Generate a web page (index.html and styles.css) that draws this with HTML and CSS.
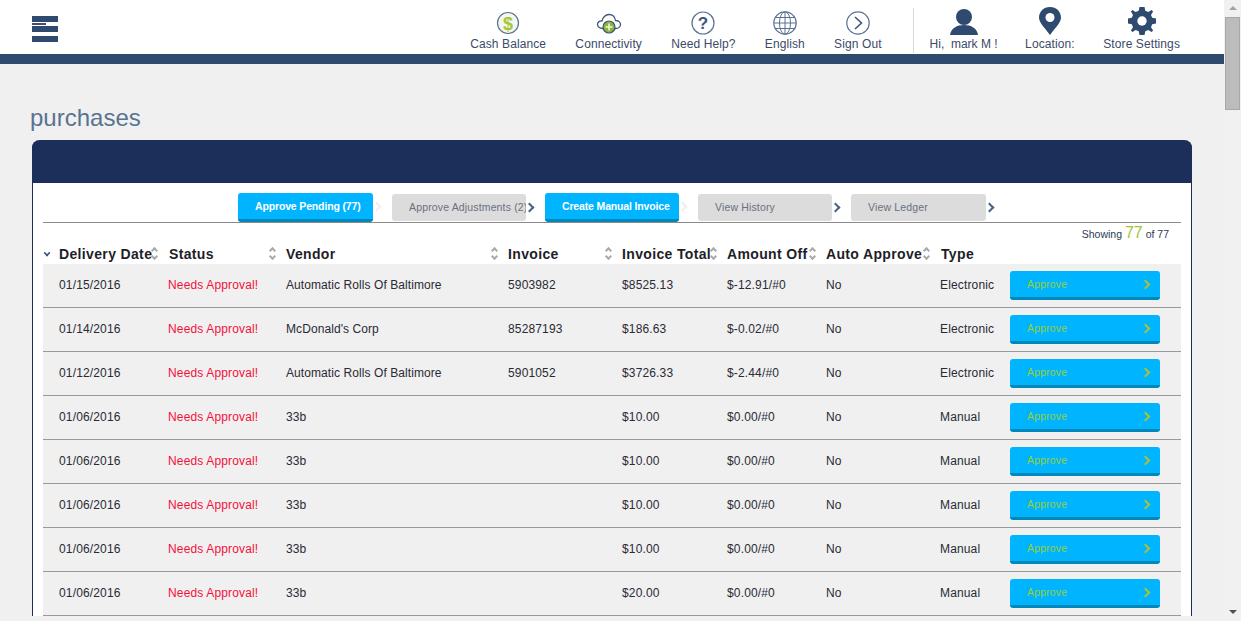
FILE: index.html
```html
<!DOCTYPE html>
<html lang="en">
<head>
    <meta charset="UTF-8">
    <meta name="viewport" content="width=device-width, initial-scale=1.0">
    <title>Purchases</title>
    <link rel="stylesheet" href="styles.css">
</head>
<body>
<div class="page">
    <div class="main">
        <header class="topbar">
            <svg class="hamburger" width="26" height="26" viewBox="0 0 26 26">
                <rect x="0" y="0" width="26" height="6" fill="#2e4a6e"/>
                <rect x="0" y="7" width="14" height="2" fill="#4a4a78"/>
                <rect x="0" y="10" width="26" height="6" fill="#2e4a6e"/>
                <rect x="0" y="20" width="26" height="6" fill="#2e4a6e"/>
            </svg>
            <nav class="topnav">
                <div class="nav-left">
                    <a class="nav-item">
                        <svg width="24" height="24" viewBox="0 0 24 24">
                            <circle cx="12" cy="12" r="10.5" fill="#f4f7ee" stroke="#5b7190" stroke-width="1.2"/>
                            <text x="12" y="18.5" class="icon-dollar">$</text>
                        </svg>
                        <span>Cash Balance</span>
                    </a>
                    <a class="nav-item">
                        <svg width="26" height="24" viewBox="0 0 26 24">
                            <path d="M7 17.5 C3.5 17.5 1.5 15.5 1.5 13.5 C1.5 11 4 9.5 6 10 C6.5 6.5 9.5 3.5 13 3.5 C16.5 3.5 19 6 19.5 9.5 C22.5 9.5 24.5 11.5 24.5 13.5 C24.5 15.5 22.5 17.5 19.5 17.5 Z" fill="#fff" stroke="#3d5679" stroke-width="1.3"/>
                            <circle cx="13" cy="16" r="6" fill="#8db33c" stroke="#3d5679" stroke-width="1.2"/>
                            <path d="M13 12.5 V19.5 M9.5 16 H16.5" stroke="#f0f5e0" stroke-width="1.6"/>
                        </svg>
                        <span>Connectivity</span>
                    </a>
                    <a class="nav-item">
                        <svg width="24" height="24" viewBox="0 0 24 24">
                            <circle cx="12" cy="12" r="11" fill="#fff" stroke="#5b7190" stroke-width="1.2"/>
                            <text x="12" y="18" class="icon-question">?</text>
                        </svg>
                        <span>Need Help?</span>
                    </a>
                    <a class="nav-item">
                        <svg width="24" height="24" viewBox="0 0 24 24" fill="none" stroke="#5b7190" stroke-width="1">
                            <circle cx="12" cy="12" r="11.2" stroke-width="1.2"/>
                            <ellipse cx="12" cy="12" rx="5.5" ry="11.2"/>
                            <path d="M12 1 V23 M1 12 H23 M2.5 6.5 H21.5 M2.5 17.5 H21.5"/>
                        </svg>
                        <span>English</span>
                    </a>
                    <a class="nav-item">
                        <svg width="24" height="24" viewBox="0 0 24 24" fill="none" stroke="#5b7190">
                            <circle cx="12" cy="12" r="11.2" stroke-width="1.2"/>
                            <path d="M9 6 L15.5 12 L9 18" stroke="#3d5679" stroke-width="1.6"/>
                        </svg>
                        <span>Sign Out</span>
                    </a>
                </div>
                <div class="nav-divider"></div>
                <a class="nav-item nav-user">
                    <svg width="28" height="26" viewBox="0 0 28 26" fill="#2e4a6e">
                        <circle cx="14" cy="8" r="8"/>
                        <path d="M0 26 C1 19 7 16 14 16 C21 16 27 19 28 26 Z"/>
                    </svg>
                    <span>Hi,&nbsp; mark M !</span>
                </a>
                <a class="nav-item nav-location">
                    <svg width="22" height="28" viewBox="0 0 22 28">
                        <path d="M11 0 C4.5 0 0 4.7 0 10.5 C0 16 6 21 11 28 C16 21 22 16 22 10.5 C22 4.7 17.500 0 11 0 Z" fill="#2e4a6e"/>
                        <circle cx="11" cy="10.500" r="4.500" fill="#fff"/>
                    </svg>
                    <span>Location:</span>
                </a>
                <a class="nav-item">
                    <svg width="28" height="28" viewBox="0 0 28 28">
                        <path d="M11.500 0 H16.500 L17.300 3.800 L20.300 5 L23.600 2.900 L25.100 4.400 L23 8 L24.200 10.800 L28 11.500 V16.500 L24.200 17.300 L23 20.200 L25.100 23.600 L23.600 25.100 L20.300 23 L17.300 24.200 L16.500 28 H11.500 L10.700 24.200 L7.700 23 L4.400 25.100 L2.900 23.600 L5 20.200 L3.800 17.300 L0 16.500 V11.500 L3.800 10.800 L5 8 L2.900 4.400 L4.400 2.900 L7.700 5 L10.700 3.800 Z" fill="#2e4a6e"/>
                        <circle cx="14" cy="14" r="4.700" fill="#fff"/>
                    </svg>
                    <span>Store Settings</span>
                </a>
            </nav>
        </header>
        <div class="topstripe"></div>

        <h1 class="page-title">purchases</h1>

        <section class="card">
            <div class="card-head"></div>
            <div class="card-body">
                <div class="tabs">
                    <a class="tab tab-active"><span class="tab-label">Approve Pending (77)</span><i class="tab-arrow arrow-faint"></i></a>
                    <a class="tab"><span class="tab-label">Approve Adjustments (2)</span><i class="tab-arrow"></i></a>
                    <a class="tab tab-active"><span class="tab-label">Create Manual Invoice</span><i class="tab-arrow arrow-faint"></i></a>
                    <a class="tab"><span class="tab-label">View History</span><i class="tab-arrow"></i></a>
                    <a class="tab"><span class="tab-label">View Ledger</span><i class="tab-arrow"></i></a>
                </div>
                <p class="showing">Showing <b>77</b> of 77</p>
                <table class="orders">
                    <colgroup>
                        <col class="c-date"><col class="c-status"><col class="c-vendor"><col class="c-invoice">
                        <col class="c-total"><col class="c-off"><col class="c-auto"><col class="c-type"><col class="c-action">
                    </colgroup>
                    <thead>
                        <tr>
                            <th><div class="th-in"><i class="sort-down"></i>Delivery Date<i class="sort"></i></div></th>
                            <th class="th-nudge"><div class="th-in">Status<i class="sort"></i></div></th>
                            <th><div class="th-in">Vendor<i class="sort"></i></div></th>
                            <th><div class="th-in">Invoice<i class="sort"></i></div></th>
                            <th><div class="th-in">Invoice Total<i class="sort"></i></div></th>
                            <th><div class="th-in">Amount Off<i class="sort"></i></div></th>
                            <th><div class="th-in">Auto Approve<i class="sort"></i></div></th>
                            <th class="th-nudge" colspan="2"><div class="th-in">Type</div></th>
                        </tr>
                    </thead>
                    <tbody>
                        <tr><td class="td-date">01/15/2016</td><td class="needs">Needs Approval!</td><td class="vendor">Automatic Rolls Of Baltimore</td><td>5903982</td><td>$8525.13</td><td>$-12.91/#0</td><td>No</td><td>Electronic</td><td class="td-action"><a class="approve">Approve</a></td></tr>
                        <tr><td class="td-date">01/14/2016</td><td class="needs">Needs Approval!</td><td class="vendor">McDonald's Corp</td><td>85287193</td><td>$186.63</td><td>$-0.02/#0</td><td>No</td><td>Electronic</td><td class="td-action"><a class="approve">Approve</a></td></tr>
                        <tr><td class="td-date">01/12/2016</td><td class="needs">Needs Approval!</td><td class="vendor">Automatic Rolls Of Baltimore</td><td>5901052</td><td>$3726.33</td><td>$-2.44/#0</td><td>No</td><td>Electronic</td><td class="td-action"><a class="approve">Approve</a></td></tr>
                        <tr><td class="td-date">01/06/2016</td><td class="needs">Needs Approval!</td><td class="vendor">33b</td><td></td><td>$10.00</td><td>$0.00/#0</td><td>No</td><td>Manual</td><td class="td-action"><a class="approve">Approve</a></td></tr>
                        <tr><td class="td-date">01/06/2016</td><td class="needs">Needs Approval!</td><td class="vendor">33b</td><td></td><td>$10.00</td><td>$0.00/#0</td><td>No</td><td>Manual</td><td class="td-action"><a class="approve">Approve</a></td></tr>
                        <tr><td class="td-date">01/06/2016</td><td class="needs">Needs Approval!</td><td class="vendor">33b</td><td></td><td>$10.00</td><td>$0.00/#0</td><td>No</td><td>Manual</td><td class="td-action"><a class="approve">Approve</a></td></tr>
                        <tr><td class="td-date">01/06/2016</td><td class="needs">Needs Approval!</td><td class="vendor">33b</td><td></td><td>$10.00</td><td>$0.00/#0</td><td>No</td><td>Manual</td><td class="td-action"><a class="approve">Approve</a></td></tr>
                        <tr><td class="td-date">01/06/2016</td><td class="needs">Needs Approval!</td><td class="vendor">33b</td><td></td><td>$20.00</td><td>$0.00/#0</td><td>No</td><td>Manual</td><td class="td-action"><a class="approve">Approve</a></td></tr>
                    </tbody>
                </table>
            </div>
        </section>
    </div>
    <div class="scrollbar">
        <div class="sb-up"></div>
        <div class="sb-thumb"></div>
        <div class="sb-track"></div>
        <div class="sb-down"></div>
    </div>
</div>
</body>
</html>
```

FILE: styles.css
```css
html, body {
    height: 100%;
    margin: 0;
    padding: 0;
    overflow: hidden;
}

body {
    font-family: "Liberation Sans", Arial, sans-serif;
    background-color: #f0f0f0;
    color: #222;
}

.page {
    display: flex;
    height: 100%;
}

.main {
    flex: 1;
    min-width: 0;
    overflow: hidden;
}

/* top bar */
.topbar {
    display: flex;
    align-items: flex-start;
    justify-content: space-between;
    height: 54px;
    background-color: #fff;
    padding: 0 44px 0 32px;
}

.hamburger {
    margin-top: 16px;
}

.topnav {
    display: flex;
    gap: 28.500px;
    height: 54px;
}

.nav-left {
    display: flex;
    gap: 29.250px;
}

.nav-item {
    display: flex;
    flex-direction: column;
    align-items: center;
    justify-content: flex-end;
    gap: 2px;
    font-size: 12px;
    letter-spacing: .1px;
    line-height: 14px;
    padding-bottom: 3px;
    box-sizing: border-box;
    height: 54px;
    color: #3b4a68;
    white-space: nowrap;
}

.nav-divider {
    width: 1px;
    height: 45px;
    margin: 8px -13px 0 3px;
    background-color: #d8d8d8;
}

.nav-user {
    letter-spacing: 0;
}

.nav-location {
    margin-left: -1px;
}

.icon-dollar {
    font: bold 18px "Liberation Sans", sans-serif;
    fill: #a5c63b;
    text-anchor: middle;
}

.icon-question {
    font: bold 17px "Liberation Sans", sans-serif;
    fill: #3d5679;
    text-anchor: middle;
}

.topstripe {
    height: 10px;
    background-color: #2e4a6e;
}

.page-title {
    margin: 40px 0 0 30px;
    height: 36px;
    font-size: 24px;
    line-height: 28px;
    font-weight: normal;
    color: #5a7391;
}

/* card */
.card {
    width: 1160px;
    margin-left: 32px;
    box-sizing: border-box;
    border-left: 1px solid #1c2f5a;
    border-right: 1px solid #1c2f5a;
    border-radius: 8px 8px 0 0;
    background-color: #fff;
}

.card-head {
    height: 43px;
    margin: 0 -1px;
    background-color: #1c2f5a;
    border-radius: 8px 8px 0 0;
}

.card-body {
    padding: 10px 10px 0;
}

/* tabs */
.tabs {
    display: flex;
    align-items: center;
    gap: 19px;
    height: 29px;
    padding-left: 195px;
    border-bottom: 1px solid #8a8a8a;
}

.tab {
    position: relative;
    flex: none;
    width: 134px;
    height: 27px;
    box-sizing: border-box;
    padding-left: 17px;
    font-size: 10.500px;
    letter-spacing: .15px;
    line-height: 27px;
    color: #6a7080;
    background-color: #dcdcdc;
    border-radius: 3px;
    white-space: nowrap;
}

.tab:first-child, .tab:last-child {
    width: 135px;
}

.tab-label {
    display: block;
    overflow: hidden;
}

.tab-active {
    height: 29px;
    line-height: 26px;
    letter-spacing: -.15px;
    color: #fff;
    font-weight: bold;
    background-color: #00b4ff;
    border-bottom: 3px solid #0088bb;
}

.tab-arrow {
    position: absolute;
    top: 10px;
    right: -7px;
    width: 5px;
    height: 5px;
    border-top: 2px solid #4a6285;
    border-right: 2px solid #4a6285;
    transform: rotate(45deg);
}

.arrow-faint {
    border-color: #eee;
}

.showing {
    margin: 0;
    height: 20px;
    padding-right: 12px;
    text-align: right;
    font-size: 10.500px;
    line-height: 20px;
    color: #2c3a58;
}

.showing b {
    font-size: 16px;
    font-weight: normal;
    color: #a5c23a;
}

/* table */
.orders {
    width: 1138px;
    table-layout: fixed;
    border-collapse: collapse;
}

.c-date { width: 125px; }
.c-status { width: 118px; }
.c-vendor { width: 222px; }
.c-invoice { width: 114px; }
.c-total { width: 105px; }
.c-off { width: 99px; }
.c-auto { width: 114px; }
.c-type { width: 70px; }
.c-action { width: 171px; }

.orders th {
    position: relative;
    height: 20px;
    padding: 1px 9px 0 0;
    font-size: 14px;
    letter-spacing: .35px;
    line-height: 20px;
    text-align: left;
    color: #1e1e28;
}

.orders .th-nudge {
    padding-left: 1px;
}

.th-in {
    display: flex;
    align-items: center;
    white-space: nowrap;
}

.sort-down {
    flex: none;
    width: 4px;
    height: 4px;
    margin: 0 9px 2px 1px;
    border-right: 2px solid #3d5679;
    border-bottom: 2px solid #3d5679;
    transform: rotate(45deg) scale(.8);
}

.sort {
    position: absolute;
    top: 3px;
    right: 9px;
    width: 8px;
    height: 15px;
}

.sort::before, .sort::after {
    content: "";
    position: absolute;
    left: 1px;
    width: 3px;
    height: 3px;
    border-left: 2px solid #aaa;
    border-top: 2px solid #aaa;
}

.sort::before {
    top: 2px;
    transform: rotate(45deg);
}

.sort::after {
    bottom: 2px;
    transform: rotate(225deg);
}

.orders td {
    height: 41px;
    padding: 0 0 2px;
    font-size: 12px;
    letter-spacing: .15px;
    background-color: #f0f0f0;
    border-bottom: 1px solid #999;
    color: #2a2a34;
    white-space: nowrap;
}

.orders .td-date {
    padding-left: 16px;
}

.orders .needs {
    color: #f5103c;
}

.orders .vendor {
    letter-spacing: .08px;
}

.orders .td-action {
    height: 43px;
    padding: 0;
}

.approve {
    display: flex;
    align-items: center;
    justify-content: space-between;
    width: 150px;
    height: 29px;
    box-sizing: border-box;
    padding: 0 9px 0 17px;
    font-size: 10.500px;
    letter-spacing: .15px;
    color: #94d040;
    background-color: #00b4ff;
    border-bottom: 3px solid #0088bb;
    border-radius: 3px;
}

.approve::after {
    content: "";
    width: 5px;
    height: 5px;
    margin-right: 2px;
    border-top: 2px solid #a5c23a;
    border-right: 2px solid #a5c23a;
    transform: rotate(45deg);
}

/* scrollbar */
.scrollbar {
    flex: none;
    display: flex;
    flex-direction: column;
    width: 17px;
    background-color: #f1f1f1;
}

.sb-up, .sb-down {
    height: 17px;
    box-sizing: border-box;
    display: flex;
    justify-content: center;
}

.sb-up::before, .sb-down::before {
    content: "";
    width: 0;
    height: 0;
    margin-top: 6px;
    border-left: 4px solid transparent;
    border-right: 4px solid transparent;
}

.sb-up::before {
    border-bottom: 4px solid #a3a3a3;
}

.sb-down::before {
    border-top: 4px solid #505050;
}

.sb-thumb {
    height: 93px;
    margin: 0 1px;
    box-sizing: border-box;
    background-color: #bcbcbc;
    border: 1px solid #a8a8a8;
}

.sb-track {
    flex: 1;
}
```
